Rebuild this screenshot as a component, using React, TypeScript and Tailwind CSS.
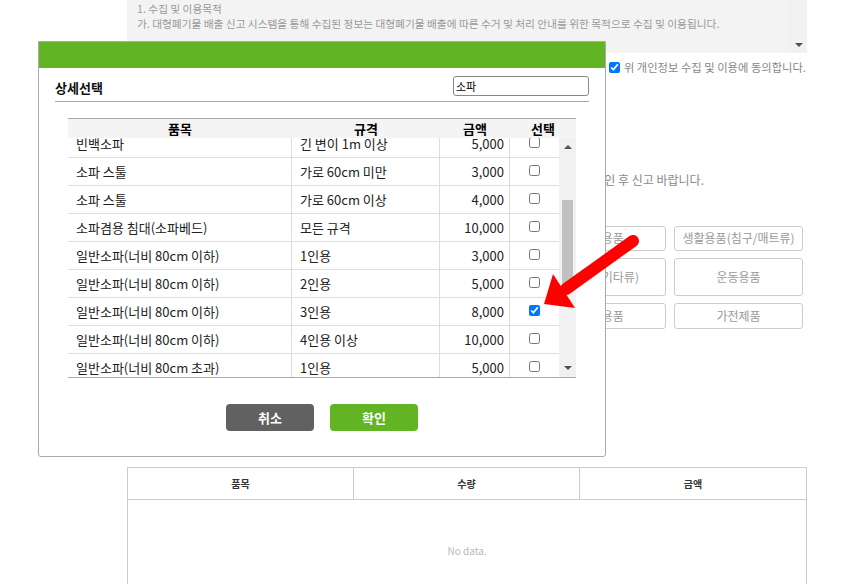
import React from 'react';

const font = { fontFamily: '"Noto Sans CJK KR", "Noto Sans", sans-serif' };

interface Row {
  name: string;
  spec: string;
  price: string;
  checked?: boolean;
}

const rows: Row[] = [
  { name: '빈백소파', spec: '긴 변이 1m 이상', price: '5,000' },
  { name: '소파 스툴', spec: '가로 60cm 미만', price: '3,000' },
  { name: '소파 스툴', spec: '가로 60cm 이상', price: '4,000' },
  { name: '소파겸용 침대(소파베드)', spec: '모든 규격', price: '10,000' },
  { name: '일반소파(너비 80cm 이하)', spec: '1인용', price: '3,000' },
  { name: '일반소파(너비 80cm 이하)', spec: '2인용', price: '5,000' },
  { name: '일반소파(너비 80cm 이하)', spec: '3인용', price: '8,000', checked: true },
  { name: '일반소파(너비 80cm 이하)', spec: '4인용 이상', price: '10,000' },
  { name: '일반소파(너비 80cm 초과)', spec: '1인용', price: '5,000' },
  { name: '일반소파(너비 80cm 초과)', spec: '2인용', price: '8,000' },
];

const categories = [
  ['가구류(장롱/서랍장)', '가구류(침대)', '가구류(소파)', '주방용품', '생활용품(침구/매트류)'],
  ['가구류(식탁/의자)', '가구류(책상/책장)', '가구류(진열장)', '가구류(기타류)', '운동용품'],
  ['악기류', '건축자재', '유아용품', '사무용품', '가전제품'],
];
const rowHeights = ['h-[25px]', 'h-[38px]', 'h-[26px]'];

function Checkbox({ checked }: { checked?: boolean }) {
  return (
    <input
      type="checkbox"
      defaultChecked={checked}
      className="m-0 h-[11px] w-[11px] accent-[#0075ff]"
    />
  );
}

function DetailModal() {
  return (
    <div className="absolute left-[38px] top-[41px] flex h-[416px] w-[568px] flex-col rounded-b-[3px] border border-[#aaaaaa] bg-white">
      <div className="h-[26px] bg-[#62b425]" />
      <div className="flex flex-col px-4">
        <div className="flex items-end justify-between border-b border-[#aaaaaa] pb-[5px] pt-[8px]">
          <h2 className="text-[13px] font-bold leading-[16px] text-[#111]">상세선택</h2>
          <input
            defaultValue="소파"
            className="h-[20px] w-[136px] rounded-[3px] border border-[#888] px-[2px] text-[11px] leading-[18px] text-black outline-none"
          />
        </div>

        <div className="mx-[13px] mt-[16px] flex flex-col">
          <div className="flex h-[20px] border-t border-[#aaaaaa] bg-[#f4f4f4] text-[13px] font-bold leading-[19px] text-black">
            <div className="w-[224px] text-center">품목</div>
            <div className="w-[148px] text-center">규격</div>
            <div className="w-[70px] text-center">금액</div>
            <div className="flex-1 text-center">선택</div>
          </div>
          <div className="flex h-[240px] border-b border-[#aaaaaa]">
            <div className="flex-1 overflow-hidden">
              <div className="-mt-[8px]">
                {rows.map((r, i) => (
                  <div key={i} className="flex h-[28px] border-b border-[#dddddd] text-[13px] text-[#222]">
                    <div className="flex w-[224px] items-center whitespace-nowrap border-r border-[#dddddd] pl-2">{r.name}</div>
                    <div className="flex w-[148px] items-center whitespace-nowrap border-r border-[#dddddd] pl-2">{r.spec}</div>
                    <div className="flex w-[70px] items-center justify-end border-r border-[#dddddd] pr-[5px]">{r.price}</div>
                    <div className="flex flex-1 items-center justify-center pb-[2px]">
                      <Checkbox checked={r.checked} />
                    </div>
                  </div>
                ))}
              </div>
            </div>
            <div className="flex w-[17px] flex-col items-center bg-[#f1f1f1]">
              <div className="mt-[7px] h-0 w-0 border-x-[4px] border-b-[4px] border-x-transparent border-b-[#505050]" />
              <div className="mt-[51px] h-[84px] w-[11px] bg-[#c1c1c1]" />
              <div className="mt-auto mb-[7px] h-0 w-0 border-x-[4px] border-t-[4px] border-x-transparent border-t-[#505050]" />
            </div>
          </div>
        </div>

        <div className="mt-[26px] flex justify-center gap-4">
          <button className="h-[27px] w-[88px] rounded-[4px] bg-[#616161] text-[13px] font-bold text-white">취소</button>
          <button className="h-[27px] w-[88px] rounded-[4px] bg-[#62b425] text-[13px] font-bold text-white">확인</button>
        </div>
      </div>
    </div>
  );
}

function RedArrow() {
  return (
    <svg className="pointer-events-none absolute left-[530px] top-[230px]" width="120" height="90" viewBox="0 0 120 90">
      <line x1="103" y1="11" x2="36" y2="59" stroke="#ff0000" strokeWidth="12" strokeLinecap="round" />
      <polygon points="14,74 23,44 45,78" fill="#ff0000" />
    </svg>
  );
}

export default function App() {
  return (
    <div className="relative h-[584px] w-[848px] overflow-hidden bg-white" style={font}>
      <div className="ml-[127px] flex w-[680px] flex-col">
        <div className="flex h-[53px] bg-[#f3f3f3]">
          <div className="flex-1 pl-[10px] pt-[1px] text-[10.7px] leading-[15px] text-[#999]">
            <p>1. 수집 및 이용목적</p>
            <p className="whitespace-nowrap">가. 대형폐기물 배출 신고 시스템을 통해 수집된 정보는 대형폐기물 배출에 따른 수거 및 처리 안내를 위한 목적으로 수집 및 이용됩니다.</p>
          </div>
          <div className="flex w-[17px] flex-col items-center justify-end bg-[#f1f1f1] pb-[6px]">
            <div className="h-0 w-0 border-x-[4px] border-t-[4px] border-x-transparent border-t-[#505050]" />
          </div>
        </div>

        <div className="mt-[6px] flex items-center justify-end gap-[4px] pr-[1px] text-[11.3px] text-[#888]">
          <Checkbox checked />
          <span>위 개인정보 수집 및 이용에 동의합니다.</span>
        </div>

        <p className="mt-[96px] pr-[103px] text-right text-[12px] leading-[16px] text-[#888]">
          배출하실 품목과 규격을 정확히 확인 후 신고 바랍니다.
        </p>

        <div className="mr-[4px] mt-[38px] flex flex-col gap-[7px]">
          {categories.map((line, i) => (
            <div key={i} className="grid grid-cols-5 gap-x-2">
              {line.map((c) => (
                <button
                  key={c}
                  className={`${rowHeights[i]} rounded-[3px] border border-[#cccccc] bg-white text-[12px] text-[#999]`}
                >
                  {c}
                </button>
              ))}
            </div>
          ))}
        </div>

        <div className="mt-[138px] border border-[#cccccc]">
          <div className="grid h-[32px] grid-cols-3 border-b border-[#cccccc] text-[10px] font-bold text-[#333]">
            <div className="flex items-center justify-center border-r border-[#cccccc]">품목</div>
            <div className="flex items-center justify-center border-r border-[#cccccc]">수량</div>
            <div className="flex items-center justify-center">금액</div>
          </div>
          <div className="flex h-[102px] items-center justify-center text-[10px] text-[#bbb]">No data.</div>
        </div>
      </div>

      <DetailModal />
      <RedArrow />
    </div>
  );
}
